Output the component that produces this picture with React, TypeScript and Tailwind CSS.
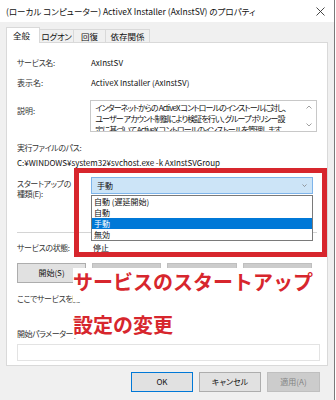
import React from "react";

const F = "font-['Segoe_UI','Noto_Sans_CJK_JP',sans-serif] [font-feature-settings:'palt']";

function Btn({ children, disabled, primary, className = "" }: { children?: React.ReactNode; disabled?: boolean; primary?: boolean; className?: string }) {
  const base = disabled
    ? "bg-[#cccccc] border-[#bfbfbf] text-[#838383]"
    : primary
    ? "bg-[#e1e1e1] border-[#0078d7] text-[#111]"
    : "bg-[#e1e1e1] border-[#adadad] text-[#111]";
  return (
    <div className={`h-[20px] border flex items-center justify-center text-[8px] ${base} ${className}`}>{children}</div>
  );
}

export default function App() {
  return (
    <div className={`relative w-[336px] h-[400px] bg-white overflow-hidden text-[#111] text-[8px] ${F}`}>
      <div className="w-[335px] h-[400px] bg-[#f0f0f0] border-r border-[#7a7a7a] flex flex-col">
        {/* title bar */}
        <div className="h-[22px] bg-white flex items-center justify-between pl-[6px] pr-[9px] shrink-0">
          <span className="text-[8.5px] leading-[10px] text-[#111]">(ローカル コンピューター) ActiveX Installer (AxInstSV) のプロパティ</span>
          <svg width="9" height="9" viewBox="0 0 9 9" className="text-[#333]">
            <path d="M0.5 0.5 L8.5 8.5 M8.5 0.5 L0.5 8.5" stroke="currentColor" strokeWidth="0.9" />
          </svg>
        </div>
        {/* tabs */}
        <div className="h-[20px] flex items-end px-[6px] shrink-0 text-[8.5px]">
          <div className="w-[34px] h-[16px] bg-white border border-b-0 border-[#d9d9d9] flex items-center pl-[6px] relative top-[1px] z-10">全般</div>
          <div className="w-[34px] h-[13px] border border-b-0 border-l-0 border-[#d9d9d9] flex items-center justify-center tracking-[-0.3px]">ログオン</div>
          <div className="w-[32px] h-[13px] border border-b-0 border-l-0 border-[#d9d9d9] flex items-center justify-center">回復</div>
          <div className="w-[44px] h-[13px] border border-b-0 border-l-0 border-[#d9d9d9] flex items-center justify-center">依存関係</div>
        </div>
        {/* panel */}
        <div className="mx-[6px] h-[324px] bg-white border border-[#d9d9d9] px-[10px] flex flex-col shrink-0">
          <div className="mt-[14px] h-[12px] leading-[12px] flex">
            <div className="w-[74px] text-[#333] tracking-[-0.4px]">サービス名:</div>
            <div>AxInstSV</div>
          </div>
          <div className="mt-[8px] h-[12px] leading-[12px] flex">
            <div className="w-[74px] text-[#333]">表示名:</div>
            <div>ActiveX Installer (AxInstSV)</div>
          </div>
          <div className="mt-[11px] flex">
            <div className="w-[74px] mt-[5px] leading-[12px] text-[#333]">説明:</div>
            <div className="w-[229px] h-[32px] border border-[#c8c8c8] flex overflow-hidden">
              <div className="flex-1 pl-[4px] pt-[1px] leading-[11px] text-[8px] tracking-[-0.9px] overflow-hidden whitespace-nowrap">
                インターネットからの ActiveX コントロールのインストールに対し、<br />
                ユーザー アカウント制御により検証を行い、グループ ポリシー設<br />
                定に基づいて ActiveX コントロールのインストールを管理します。
              </div>
              <div className="w-[14px] flex flex-col items-center justify-between py-[4px] text-[#888]">
                <svg width="6" height="4" viewBox="0 0 6 4"><path d="M0.5 3.5 L3 1 L5.5 3.5" fill="none" stroke="currentColor" strokeWidth="0.8" /></svg>
                <svg width="6" height="4" viewBox="0 0 6 4"><path d="M0.5 0.5 L3 3 L5.5 0.5" fill="none" stroke="currentColor" strokeWidth="0.8" /></svg>
              </div>
            </div>
          </div>
          <div className="mt-[10px] h-[12px] leading-[12px] text-[#333] tracking-[-0.4px]">実行ファイルのパス:</div>
          <div className="mt-[3px] h-[12px] leading-[12px]">C:¥WINDOWS¥system32¥svchost.exe -k AxInstSVGroup</div>
          <div className="mt-[8px] flex">
            <div className="w-[74px] mt-[2px] leading-[10px] text-[#333] tracking-[-0.4px]">スタートアップの<br />種類(E):</div>
            <div className="w-[222px] h-[17px] bg-[#cce4f7] border border-[#7eb4ea] flex items-center justify-between pl-[5px] pr-[5px]">
              <span>手動</span>
              <svg width="5" height="3" viewBox="0 0 5 3" className="text-[#777]"><path d="M0.5 0.5 L2.5 2.5 L4.5 0.5" fill="none" stroke="currentColor" strokeWidth="0.7" /></svg>
            </div>
          </div>
          <div className="mt-[33px] h-px bg-[#d4d4d4]" />
          <div className="mt-[9px] h-[12px] leading-[12px] flex">
            <div className="w-[76px] text-[#333] tracking-[-0.4px]">サービスの状態:</div>
            <div>停止</div>
          </div>
          <div className="mt-[9px] flex gap-[6px]">
            <Btn className="w-[69px]">開始(S)</Btn>
            <Btn disabled className="w-[69px]" />
            <Btn disabled className="w-[70px]" />
            <Btn disabled className="w-[69px]" />
          </div>
          <div className="mt-[10px] h-[12px] leading-[12px] text-[#333] tracking-[-0.4px]">ここでサービスを開</div>
          <div className="mt-[23px] h-[12px] leading-[12px] text-[#333] tracking-[-0.5px]">開始パラメーター(</div>
          <div className="mt-[4px] h-[17px] w-[303px] border border-[#e3e3e3]" />
        </div>
        {/* bottom buttons */}
        <div className="mt-[6px] flex justify-end gap-[6px] pr-[14px]">
          <Btn primary className="w-[62px]">OK</Btn>
          <Btn className="w-[62px]">キャンセル</Btn>
          <Btn disabled className="w-[53px]">適用(A)</Btn>
        </div>
      </div>

      {/* dropdown list overlay */}
      <div className="absolute left-[91px] top-[195px] w-[222px] h-[46px] bg-white border border-[#7a7a7a] flex flex-col">
        <div className="h-[11px] leading-[11px] pl-[2px]">自動 (遅延開始)</div>
        <div className="h-[11px] leading-[11px] pl-[2px]">自動</div>
        <div className="h-[11px] leading-[11px] pl-[2px] bg-[#0078d7] text-white">手動</div>
        <div className="h-[11px] leading-[11px] pl-[2px]">無効</div>
      </div>

      {/* red annotation frame */}
      <div className="absolute left-[74px] top-[168px] w-[253px] h-[89px] border-[5px] border-[#d7262d]" />

      {/* red annotation text */}
      <div className="absolute left-[73px] top-[268px] w-[249px] h-[34px] bg-white text-[#d7262d] font-bold text-[20px] leading-[28px] [font-feature-settings:normal] font-['Noto_Sans_CJK_JP',sans-serif]">
        サービスのスタートアップ
      </div>
      <div className="absolute left-[73px] top-[312px] h-[26px] bg-white text-[#d7262d] font-bold text-[20px] leading-[26px] [font-feature-settings:normal] font-['Noto_Sans_CJK_JP',sans-serif]">
        設定の変更
      </div>
    </div>
  );
}
